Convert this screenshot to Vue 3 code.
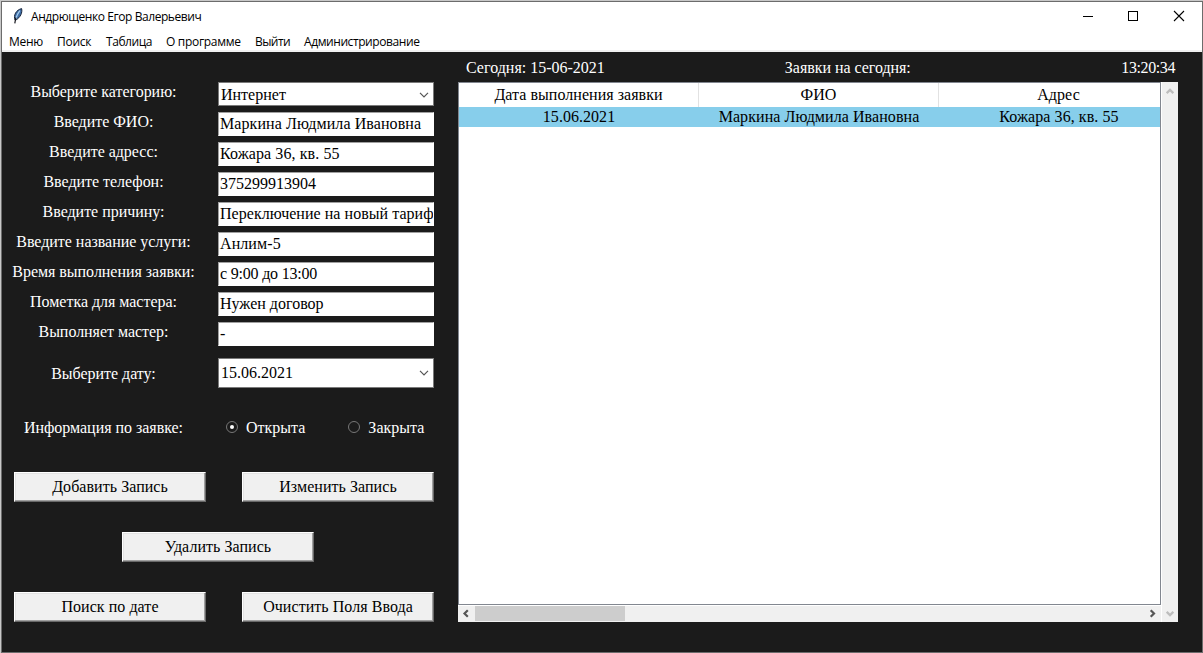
<script setup>
const menu = [
  { text: 'Меню', cls: 'm1' },
  { text: 'Поиск', cls: 'm2' },
  { text: 'Таблица', cls: 'm3' },
  { text: 'О программе', cls: 'm4' },
  { text: 'Выйти', cls: 'm5' },
  { text: 'Администрирование', cls: 'm6' },
]
const fields = [
  { label: 'Выберите категорию:', value: 'Интернет', combo: true },
  { label: 'Введите ФИО:', value: 'Маркина Людмила Ивановна', cls: 'wide' },
  { label: 'Введите адресс:', value: 'Кожара 36, кв. 55', cls: 'wide' },
  { label: 'Введите телефон:', value: '375299913904' },
  { label: 'Введите причину:', value: 'Переключение на новый тариф', cls: 'slight' },
  { label: 'Введите название услуги:', value: 'Анлим-5', cls: 'wide' },
  { label: 'Время выполнения заявки:', value: 'с 9:00 до 13:00', cls: 'tight' },
  { label: 'Пометка для мастера:', value: 'Нужен договор' },
  { label: 'Выполняет мастер:', value: '-', cls: 'wide' },
]
const columns = ['Дата выполнения заявки', 'ФИО', 'Адрес']
const row = ['15.06.2021', 'Маркина Людмила Ивановна', 'Кожара 36, кв. 55']
</script>

<template>
  <div class="window">
    <header class="titlebar">
      <svg class="feather" width="12" height="16" viewBox="0 0 12 16">
        <path d="M3 12C1.2 7.5 4 2 9.6.6C10.6 4.5 8.5 9.5 3.6 12.2Z" fill="#3e6fa8" stroke="#18243a" stroke-width="1" />
        <path d="M7.8 2.6C6 5 4.6 8 3.4 11.5" fill="none" stroke="#a8cdee" stroke-width="1.3" />
        <path d="M3.8 9.5L2.8 15.3" stroke="#15151c" stroke-width="1.2" />
      </svg>
      <span class="title">Андрющенко Егор Валерьевич</span>
      <svg class="controls" width="102" height="12" viewBox="0 0 102 12" fill="none" stroke="#000">
        <path d="M0 6.5H10" />
        <rect x="45.5" y="1.5" width="9" height="9" />
        <path d="M91 1L101 11M101 1L91 11" stroke-width="1.1" />
      </svg>
    </header>
    <nav class="menu">
      <span v-for="m in menu" :key="m.text" :class="m.cls">{{ m.text }}</span>
    </nav>
    <main class="content">
      <section class="form">
        <div v-for="f in fields" :key="f.label" class="row">
          <label class="label">{{ f.label }}</label>
          <div :class="['field', f.cls, { combo: f.combo }]">
            <span>{{ f.value }}</span>
            <svg v-if="f.combo" class="chev" width="10" height="6" viewBox="0 0 10 6"><path d="M1 .8L5 4.8L9 .8" fill="none" stroke="#555" stroke-width="1.2" /></svg>
          </div>
        </div>
        <div class="row date">
          <label class="label">Выберите дату:</label>
          <div class="field combo">
            <span>15.06.2021</span>
            <svg class="chev" width="10" height="6" viewBox="0 0 10 6"><path d="M1 .8L5 4.8L9 .8" fill="none" stroke="#555" stroke-width="1.2" /></svg>
          </div>
        </div>
        <div class="row state">
          <label class="label">Информация по заявке:</label>
          <div class="radios">
            <i class="radio on"></i><span class="first">Открыта</span>
            <i class="radio"></i><span>Закрыта</span>
          </div>
        </div>
        <div class="buttons">
          <div class="pair"><button>Добавить Запись</button><button>Изменить Запись</button></div>
          <div class="single"><button>Удалить Запись</button></div>
          <div class="pair"><button>Поиск по дате</button><button>Очистить Поля Ввода</button></div>
        </div>
      </section>
      <section class="orders">
        <div class="info">
          <span>Сегодня: 15-06-2021</span>
          <span class="today">Заявки на сегодня:</span>
          <span class="clock">13:20:34</span>
        </div>
        <div class="tablebox">
          <div class="table">
            <div class="cells head"><span v-for="c in columns" :key="c">{{ c }}</span></div>
            <div class="cells selected"><span v-for="c in row" :key="c">{{ c }}</span></div>
          </div>
          <div class="vbar">
            <svg width="8" height="7" viewBox="0 0 8 7"><path d="M.7 5.2L4 1.9L7.3 5.2" fill="none" stroke="#bdbdbd" stroke-width="2.2" /></svg>
            <svg width="8" height="7" viewBox="0 0 8 7"><path d="M.7 1.8L4 5.1L7.3 1.8" fill="none" stroke="#bdbdbd" stroke-width="2.2" /></svg>
          </div>
          <div class="hbar">
            <svg width="17" height="15" viewBox="0 0 17 15"><path d="M9.8 4.2L6.5 7.5L9.8 10.8" fill="none" stroke="#555" stroke-width="2.2" /></svg>
            <div class="thumb"></div>
            <svg class="right" width="17" height="15" viewBox="0 0 17 15"><path d="M6.7 4.2L10 7.5L6.7 10.8" fill="none" stroke="#555" stroke-width="2.2" /></svg>
          </div>
        </div>
      </section>
    </main>
  </div>
</template>

<style>
body { margin: 0; overflow: hidden; }
</style>

<style scoped>
* { box-sizing: border-box; }
.window {
  width: 1203px; height: 653px; display: flex; flex-direction: column;
  padding: 2px 1px 1px 2px; background: #1b1b1b;
  box-shadow: inset 1px 1px #c8c8c8, inset 2px 2px #6c6c6c, inset -1px -1px #6c6c6c;
  font: 16px/20px "Liberation Serif", "Times New Roman", serif;
  white-space: nowrap;
}
.titlebar { height: 30px; background: #fff; display: flex; align-items: center; font: 12px/16px "Open Sans", "Noto Sans", sans-serif; padding: 0 17px 2px 10px; color: #000; }
.feather { margin-right: 7px; }
.title { letter-spacing: -0.43px; padding-top: 2px; }
.controls { margin-left: auto; }
.menu { height: 20px; background: #fff; border-bottom: 2px solid #f0f0f0; display: flex; gap: 14px; padding-left: 7px; font: 12px/19px "Open Sans", "Noto Sans", sans-serif; color: #000; }
.m1 { width: 34px; letter-spacing: -0.3px; }
.m2 { width: 35px; letter-spacing: -0.25px; }
.m3 { width: 46px; letter-spacing: -0.45px; }
.m4 { width: 75px; letter-spacing: -0.3px; }
.m5 { width: 35px; letter-spacing: -0.55px; }
.m6 { letter-spacing: -0.42px; }
.content { flex: 1; display: flex; background: #1b1b1b; color: #fff; }
.form { width: 456px; padding-top: 30px; }
.row { display: flex; height: 30px; }
.label { width: 203px; text-align: center; margin-right: 13px; letter-spacing: -0.03px; }
.field { width: 216px; height: 24px; background: #fff; color: #000; border: 1px solid #fff; border-top-color: #a0a0a0; border-left-color: #a0a0a0; padding-left: 1px; line-height: 22px; overflow: hidden; }
.wide { letter-spacing: 0.09px; }
.slight { letter-spacing: 0.04px; }
.tight { letter-spacing: -0.2px; }
.combo { border: 1px solid #7a7a7a; padding: 2px 4px 0 2px; display: flex; align-items: center; justify-content: space-between; }
.date { margin-top: 6px; height: 60px; }
.date .field { height: 30px; padding-top: 0; }
.date .label { padding-top: 6px; }
.state { height: 54px; }
.radios { display: flex; height: 20px; align-items: center; padding-left: 8px; }
.radio { width: 12px; height: 12px; border: 1px solid #777; border-radius: 50%; margin-right: 8px; margin-top: -2px; display: flex; align-items: center; justify-content: center; }
.radio.on::after { content: ""; width: 4px; height: 4px; border-radius: 50%; background: #fff; }
.first { margin-right: 43px; }
.buttons { display: flex; flex-direction: column; gap: 30px; padding-left: 12px; }
.pair { display: flex; gap: 36px; }
.single { padding-left: 108px; display: flex; }
button { width: 192px; height: 30px; padding: 0; border: 1px solid; border-color: #fff #696969 #696969 #fff; box-shadow: inset -1px -1px #a0a0a0, inset 1px 1px #e3e3e3; background: #f0f0f0; color: #000; font: inherit; letter-spacing: 0.05px; text-align: center; border-radius: 0; }
.orders { width: 720px; }
.info { height: 30px; padding: 6px 3px 0 8px; display: flex; }
.today { margin-left: 180px; letter-spacing: -0.04px; }
.clock { margin-left: auto; letter-spacing: -0.4px; }
.tablebox { display: grid; grid-template-columns: 703px 17px; grid-template-rows: 523px 17px; background: #f0f0f0; }
.table { width: 703px; border: 1px solid #828790; background: #fff; color: #000; overflow: hidden; }
.cells { display: flex; }
.cells span { width: 240px; flex: none; text-align: center; letter-spacing: 0.07px; }
.cells span:first-child { letter-spacing: 0.04px; }
.head { height: 24px; line-height: 24px; }
.head span { border-right: 1px solid #e2e2e2; }
.selected { height: 20px; background: #87ceeb; }
.vbar { grid-row: 1 / 3; grid-column: 2; display: flex; flex-direction: column; justify-content: space-between; align-items: center; padding: 6px 1px 5px 0; border-left: 1px solid #fff; }
.hbar { display: flex; border-top: 1px solid #fff; }
.thumb { width: 150px; height: 15px; background: #cdcdcd; }
.right { margin-left: auto; }
</style>
